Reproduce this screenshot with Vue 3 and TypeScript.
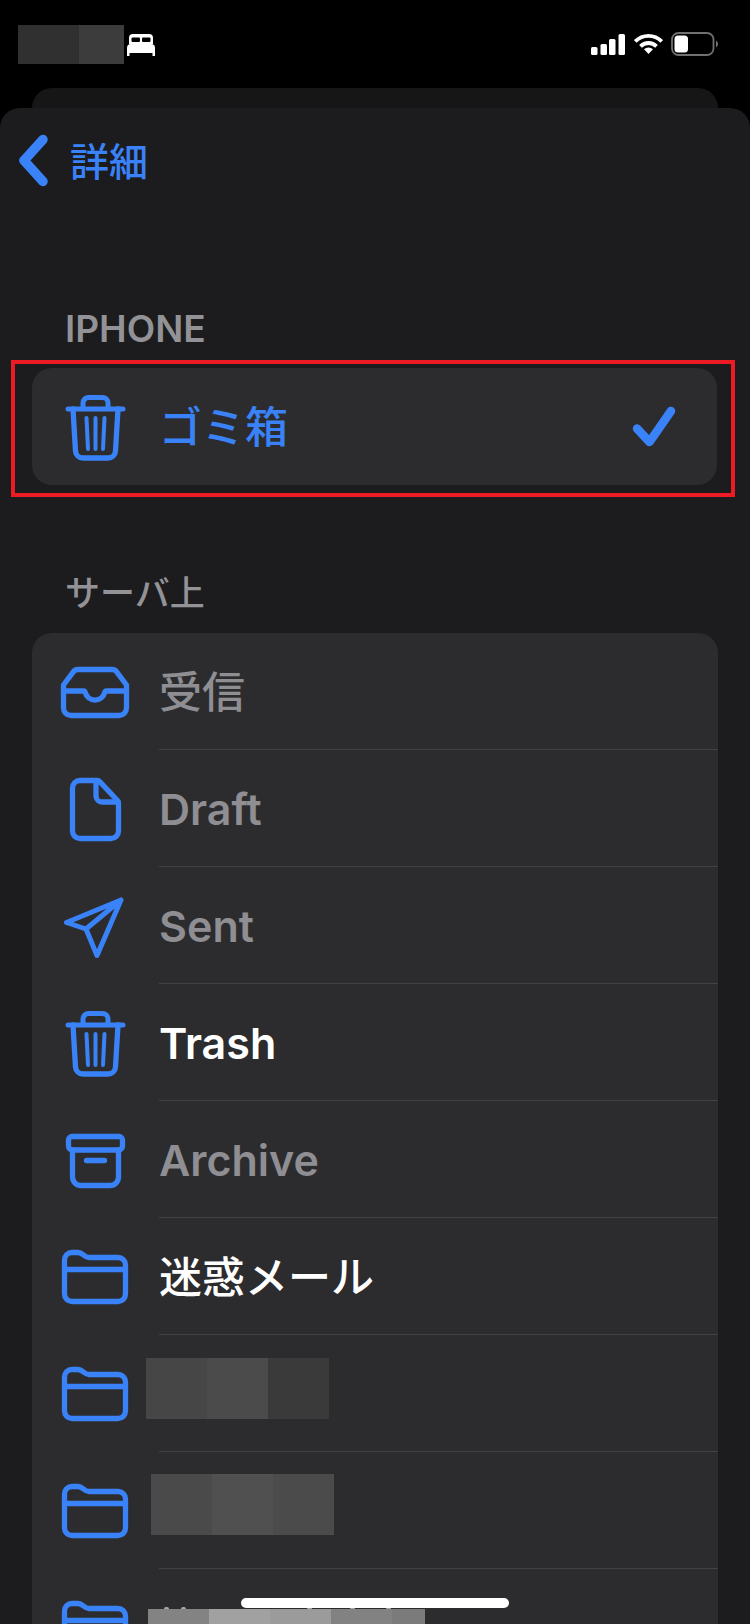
<script setup lang="ts">
interface Stroke { d: string; w?: number }
const icons: Record<string, Stroke[]> = {
  inbox: [
    { d: 'M23 17.5H57a6 6 0 0 1 4.7 2.3L71.5 33V56a7.5 7.5 0 0 1-7.5 7.5H16A7.5 7.5 0 0 1 8.5 56V33L18.3 19.8A6 6 0 0 1 23 17.5Z' },
    { d: 'M8.5 39H28.5C29.5 39 30 39.5 30.3 40.5A10 10 0 0 0 49.7 40.5C50 39.5 50.5 39 51.5 39H71.5' },
  ],
  draft: [
    { d: 'M25 11.5H42a4 4 0 0 1 3 1.4L62 31a5 5 0 0 1 1.5 3.6V62a7.5 7.5 0 0 1-7.5 7.5H25A7.5 7.5 0 0 1 17.5 62V19A7.5 7.5 0 0 1 25 11.5Z' },
    { d: 'M41 12V27a6 6 0 0 0 6 6H63' },
  ],
  sent: [
    { d: 'M66 14L11.5 36.5L31 43L42 69.5ZM66 14L31 43', w: 5 },
  ],
  trash: [
    { d: 'M13 22H68', w: 5 },
    { d: 'M18 22L20.5 64a7.5 7.5 0 0 0 7.5 7H53a7.5 7.5 0 0 0 7.5-7L63 22' },
    { d: 'M28 21V16a5.5 5.5 0 0 1 5.5-5.500H47.500A5.500 5.500 0 0 1 53 16V21', w: 5 },
    { d: 'M31.500 31L33 62M40.500 31V62M49.500 31L48 62', w: 4 },
  ],
  archive: [
    { d: 'M17 16.500H64a3.500 3.500 0 0 1 3.500 3.500V26a4 4 0 0 1-4 4H17.500a4 4 0 0 1-4-4V20a3.500 3.500 0 0 1 3.500-3.500Z' },
    { d: 'M17.500 30V57a8.500 8.500 0 0 0 8.500 8.500H55a8.500 8.500 0 0 0 8.500-8.500V30' },
    { d: 'M31.500 40.500H49.500' },
  ],
  folder: [
    { d: 'M9.500 23a7.500 7.500 0 0 1 7.500-7.500H23C28 15.500 29 20.500 34 20.500H63a7.500 7.500 0 0 1 7.500 7.500V57a7.500 7.500 0 0 1-7.500 7.500H17A7.500 7.500 0 0 1 9.500 57Z' },
    { d: 'M9.500 32.500H70.500' },
  ],
}

interface Row {
  icon: string
  label?: string
  tone?: 'muted' | 'white'
  cjk?: boolean
  mosaic?: { cls: string; tiles: string[]; bits?: number[] }
}
const rows: Row[] = [
  { icon: 'inbox', label: '受信', tone: 'muted', cjk: true },
  { icon: 'draft', label: 'Draft', tone: 'muted' },
  { icon: 'sent', label: 'Sent', tone: 'muted' },
  { icon: 'trash', label: 'Trash', tone: 'white' },
  { icon: 'archive', label: 'Archive', tone: 'muted' },
  { icon: 'folder', label: '迷惑メール', tone: 'white', cjk: true },
  { icon: 'folder', mosaic: { cls: 'm-a', tiles: ['#464647', '#4b4b4b', '#3a3a3b'] } },
  { icon: 'folder', mosaic: { cls: 'm-b', tiles: ['#4a4a4b', '#505050', '#4b4b4c'] } },
  {
    icon: 'folder',
    mosaic: {
      cls: 'm-c',
      tiles: ['#838384', '#a1a1a1', '#9b9b9b', '#828282', '#7b7b7b'],
      bits: [16, 33, 159, 202, 238],
    },
  },
]
const statusTiles = ['#303030', '#3c3c3c']
const bars = [
  { x: 0, y: 13, h: 8 },
  { x: 9.5, y: 10, h: 11 },
  { x: 18, y: 5, h: 16 },
  { x: 27.5, y: 0, h: 21 },
]
</script>

<template>
  <div class="screen">
    <header class="status">
      <div class="status-left">
        <div class="status-mosaic">
          <span v-for="c in statusTiles" :key="c" class="status-tile" :style="{ background: c }"></span>
        </div>
        <svg class="bed" width="28" height="22" viewBox="0 0 28 22">
          <path d="M2 10V4a4 4 0 0 1 4-4H22a4 4 0 0 1 4 4V10Z" fill="#fff" />
          <rect x="4.500" y="3.500" width="8.500" height="4.500" rx="1" fill="#000" />
          <rect x="15" y="3.500" width="8.500" height="4.500" rx="1" fill="#000" />
          <path d="M0 22V14a4 4 0 0 1 4-4H24a4 4 0 0 1 4 4V22H25.500V19H2.500V22Z" fill="#fff" />
        </svg>
      </div>
      <div class="status-right">
        <svg width="34" height="21" viewBox="0 0 34 21">
          <rect v-for="b in bars" :key="b.x" :x="b.x" :y="b.y" width="6.500" :height="b.h" rx="1.500" fill="#fff" />
        </svg>
        <svg width="29" height="20" viewBox="0 0 29 20">
          <path d="M1.300 7.500A18.500 18.500 0 0 1 27.700 7.500M6.500 12.300A11.300 11.300 0 0 1 22.500 12.300" fill="none" stroke="#fff" stroke-width="3.800" />
          <path d="M14.500 20L10 15.300A6.500 6.500 0 0 1 19 15.300Z" fill="#fff" />
        </svg>
        <svg width="48" height="24" viewBox="0 0 48 24">
          <rect x="1" y="1" width="41.500" height="22" rx="6.500" fill="none" stroke="#707070" stroke-width="1.800" />
          <rect x="3.500" y="3.500" width="13.500" height="17" rx="3.500" fill="#fff" />
          <path d="M45 8.500a4 4 0 0 1 0 7Z" fill="#707070" />
        </svg>
      </div>
    </header>

    <div class="back-card"></div>

    <main class="sheet">
      <nav class="nav">
        <svg class="chevron" width="34" height="54" viewBox="0 0 34 54">
          <path d="M25 5.500L6 26.500L25 47.500" fill="none" stroke="#3a82f7" stroke-width="9.500" stroke-linecap="round" stroke-linejoin="round" />
        </svg>
        <span class="nav-title">詳細</span>
      </nav>

      <h2 class="section first">IPHONE</h2>
      <div class="highlight">
        <div class="card">
          <div class="row">
            <svg class="icon" width="80" height="80" viewBox="0 0 80 80" fill="none">
              <path v-for="(p, i) in icons.trash" :key="i" :d="p.d" :stroke-width="p.w ?? 5.300" stroke="#3a82f7" stroke-linecap="round" stroke-linejoin="round" />
            </svg>
            <span class="label blue cjk">ゴミ箱</span>
            <svg class="check" width="46" height="44" viewBox="0 0 46 44">
              <path d="M6 23.500L18.500 37L40 6" fill="none" stroke="#3a82f7" stroke-width="8.500" stroke-linecap="round" stroke-linejoin="round" />
            </svg>
          </div>
        </div>
      </div>

      <h2 class="section second">サーバ上</h2>
      <div class="card">
        <div v-for="(r, i) in rows" :key="i" class="row list-row">
          <svg class="icon" width="80" height="80" viewBox="0 0 80 80" fill="none">
            <path v-for="(p, j) in icons[r.icon]" :key="j" :d="p.d" :stroke-width="p.w ?? 5.300" stroke="#3a82f7" stroke-linecap="round" stroke-linejoin="round" />
          </svg>
          <span v-if="r.label" class="label" :class="[r.tone, { cjk: r.cjk }]">{{ r.label }}</span>
          <div v-if="r.mosaic" class="mosaic" :class="r.mosaic.cls">
            <span v-for="(c, k) in r.mosaic.tiles" :key="k" class="tile" :style="{ background: c }"></span>
            <div v-for="b in r.mosaic.bits" :key="b" class="bit" :style="{ left: b + 'px' }"></div>
          </div>
        </div>
      </div>
    </main>

    <div class="home"></div>
  </div>
</template>

<style>
html, body { margin: 0; background: #000; }
</style>

<style scoped>
.screen {
  position: relative;
  width: 750px;
  height: 1624px;
  overflow: hidden;
  background: #000;
  font-family: Inter, "Noto Sans CJK JP", sans-serif;
}
.status {
  height: 88px;
  box-sizing: border-box;
  padding: 0 31px 0 18px;
  display: flex;
  align-items: center;
  justify-content: space-between;
}
.status-left { display: flex; align-items: center; gap: 3px; }
.status-mosaic { display: flex; height: 39px; }
.status-tile { display: block; height: 39px; }
.status-tile:first-child { width: 61px; }
.status-tile:last-child { width: 45px; }
.bed { margin-top: 2px; }
.status-right { display: flex; align-items: center; gap: 8.5px; }
.back-card {
  height: 20px;
  margin: 0 32px;
  background: #161617;
  border-radius: 20px 20px 0 0;
}
.sheet {
  height: 1516px;
  background: #1c1c1e;
  border-radius: 20px 20px 0 0;
}
.nav {
  height: 106px;
  display: flex;
  align-items: center;
  padding-left: 18px;
  box-sizing: border-box;
}
.nav-title {
  margin-left: 18px;
  font-size: 39px;
  font-weight: 500;
  line-height: 1;
  color: #3a82f7;
}
.section {
  margin: 0 0 0 65px;
  height: 40px;
  font-size: 35px;
  line-height: 42px;
  font-weight: 500;
  color: #929297;
}
.section.first {
  margin-top: 94px;
  font-size: 37px;
  font-weight: 600;
}
.section.second { margin-top: 75px; margin-bottom: 21px; }
.highlight {
  margin: 12px 15px 0 11px;
  padding: 4px 14px 8px 17px;
  border: 4px solid #ed1c24;
}
.card {
  margin: 0;
  border-radius: 20px;
  background: #2c2c2e;
  overflow: hidden;
}
.sheet > .card { margin: 0 32px; }
.row {
  position: relative;
  display: flex;
  align-items: center;
  height: 117px;
  padding-left: 23px;
}
.list-row { box-sizing: border-box; }
.list-row:not(:first-child)::before {
  content: "";
  position: absolute;
  top: -1px;
  left: 127px;
  right: 0;
  height: 1px;
  background: #424244;
}
.icon { flex: none; }
.label {
  margin-left: 24px;
  margin-top: 2px;
  font-size: 43px;
  line-height: 1.2;
  font-weight: 600;
}
.label.cjk { font-weight: 500; }
.label.muted { color: #8e8e93; }
.label.white { color: #fff; }
.label.blue { color: #3a82f7; }
.check { margin-left: auto; margin-right: 40px; }
.mosaic { position: absolute; display: flex; height: 61px; }
.tile { display: block; width: 61px; height: 61px; }
.m-a { left: 114px; top: 23px; }
.m-b { left: 119px; top: 22px; }
.m-c { left: 116px; top: 40px; }
.m-c .tile:last-of-type { width: 33px; }
.bit {
  position: absolute;
  top: -2px;
  width: 5px;
  height: 2px;
  border-radius: 2px 2px 0 0;
  background: #a8a8a8;
}
.home {
  position: absolute;
  left: 241px;
  top: 1598px;
  width: 268px;
  height: 10px;
  border-radius: 5px;
  background: #fff;
}
</style>
